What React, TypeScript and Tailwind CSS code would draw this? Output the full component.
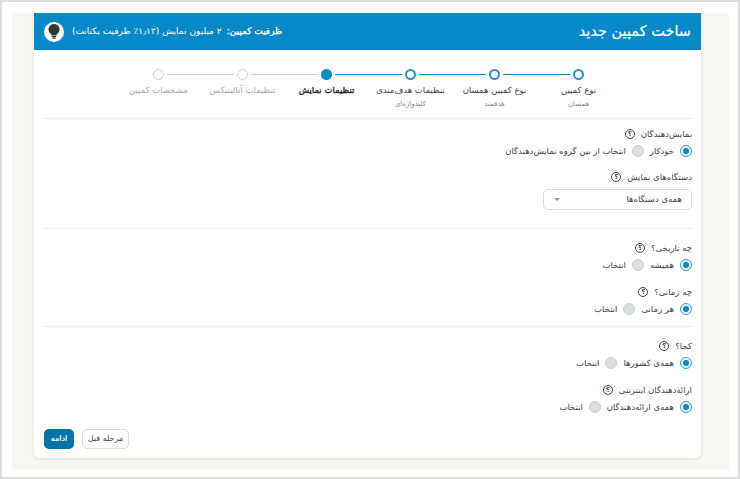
const font = "font-['DejaVu_Sans',sans-serif]";

function Help() {
  return (
    <span className="flex h-[10px] w-[10px] items-center justify-center rounded-full border border-[#444] text-[7px] font-bold leading-none text-[#444]">
      ؟
    </span>
  );
}

function Label({ children, className = "" }: { children: string; className?: string }) {
  return (
    <div className={`flex h-[14px] items-center gap-[6px] text-[8.5px] text-[#444] ${className}`}>
      <span>{children}</span>
      <Help />
    </div>
  );
}

function Radio({ label, on = false }: { label: string; on?: boolean }) {
  return (
    <div className="flex items-center gap-[6px]">
      {on ? (
        <span className="flex h-[12px] w-[12px] items-center justify-center rounded-full border border-[#3b9bd6] bg-[#e8f3fa]">
          <span className="h-[6px] w-[6px] rounded-full bg-[#0688c9]" />
        </span>
      ) : (
        <span className="h-[12px] w-[12px] rounded-full border border-[#c9cdd0] bg-[#dcdfe2]" />
      )}
      <span className="text-[8.5px] text-[#444]">{label}</span>
    </div>
  );
}

function Radios({ a, b, className = "" }: { a: string; b: string; className?: string }) {
  return (
    <div className={`flex h-[14px] items-center gap-[6px] ${className}`}>
      <Radio label={a} on />
      <Radio label={b} />
    </div>
  );
}

type Step = { t: string; s?: string; state: "done" | "active" | "todo" };
const steps: Step[] = [
  { t: "نوع کمپین", s: "همسان", state: "done" },
  { t: "نوع کمپین همسان", s: "هدفمند", state: "done" },
  { t: "تنظیمات هدف‌مندی", s: "کلیدواژه‌ای", state: "done" },
  { t: "تنظیمات نمایش", state: "active" },
  { t: "تنظیمات آنالیتیکس", state: "todo" },
  { t: "مشخصات کمپین", state: "todo" },
];

function StepItem({ step, first, last, nextTodo }: { step: Step; first: boolean; last: boolean; nextTodo: boolean }) {
  const before = step.state === "todo" ? "bg-[#cfcfcf]" : "bg-[#0688c9]";
  const after = nextTodo ? "bg-[#cfcfcf]" : "bg-[#0688c9]";
  return (
    <div className="flex w-[84px] flex-col items-center">
      <div className="flex h-[12px] w-full items-center gap-[3px]">
        <span className={`h-px flex-1 ${first ? "" : before}`} />
        {step.state === "active" ? (
          <span className="h-[11px] w-[11px] rounded-full bg-[#0688c9]" />
        ) : step.state === "done" ? (
          <span className="h-[11px] w-[11px] rounded-full border-2 border-[#2a94d2] bg-white" />
        ) : (
          <span className="h-[11px] w-[11px] rounded-full border-[1.5px] border-[#cfcfcf] bg-white" />
        )}
        <span className={`h-px flex-1 ${last ? "" : after}`} />
      </div>
      <div
        className={`mt-[3px] whitespace-nowrap text-[8.5px] leading-[14px] ${
          step.state === "active"
            ? "text-[#222] [-webkit-text-stroke:0.3px_#222]"
            : step.state === "todo"
              ? "text-[#aaa]"
              : "text-[#444]"
        }`}
      >
        {step.t}
      </div>
      {step.s && <div className="mt-px whitespace-nowrap text-[7px] leading-[12px] text-[#888]">{step.s}</div>}
    </div>
  );
}

export default function App() {
  return (
    <div dir="rtl" className={`h-[479px] w-[740px] overflow-hidden border-2 border-[#dcdcdc] bg-white pb-[8px] pl-[10px] pr-[9px] pt-[11px] ${font}`}>
      <div className="h-[456px] bg-[#f7f6f3] pl-[22px] pr-[28px]">
        <div className="h-[445px] rounded-b-[5px] bg-white shadow-[0_1px_3px_rgba(0,0,0,0.12)]">
          <div className="flex h-[37px] items-center justify-between bg-[#0688c9] pl-[10px] pr-[10px] text-white">
            <div className="text-[14.5px] [-webkit-text-stroke:0.2px_#fff]">ساخت کمپین جدید</div>
            <div className="flex items-center gap-[8px]">
              <div className="flex items-center gap-[5px] text-[9px]">
                <span className="[-webkit-text-stroke:0.3px_#fff]">ظرفیت کمپین:</span>
                <span>۲ میلیون نمایش (۱٫۱۳٪ ظرفیت یکتانت)</span>
              </div>
              <div className="flex h-[20px] w-[20px] items-center justify-center rounded-full bg-white">
                <svg width="12" height="15" viewBox="0 0 12 15" fill="#333">
                  <path d="M6 0a5.5 5.5 0 0 0-3.4 9.8c.6.5.9 1 .9 1.7h5c0-.7.3-1.2.9-1.7A5.5 5.5 0 0 0 6 0z" />
                  <rect x="3.7" y="12" width="4.6" height="1.2" rx=".5" />
                  <rect x="4.4" y="13.6" width="3.2" height="1.2" rx=".5" />
                </svg>
              </div>
            </div>
          </div>

          <div className="flex h-[68px] justify-center pl-[2px] pt-[18px]">
            {steps.map((s, i) => (
              <StepItem
                key={s.t}
                step={s}
                first={i === 0}
                last={i === steps.length - 1}
                nextTodo={i + 1 < steps.length && steps[i + 1].state === "todo"}
              />
            ))}
          </div>

          <div className="pl-[10px] pr-[9px]">
            <div className="border-t border-[#ececec] pt-[8px]">
              <Label>نمایش‌دهندگان</Label>
              <Radios className="mt-[3px]" a="خودکار" b="انتخاب از بین گروه نمایش‌دهندگان" />
              <Label className="mt-[12px]">دستگاه‌های نمایش</Label>
              <div className="mt-[5px] flex h-[21px] w-[149px] items-center justify-between rounded-[5px] border border-[#d9dcdf] pl-[10px] pr-[9px] text-[8.5px] text-[#444]">
                <span>همه‌ی دستگاه‌ها</span>
                <span className="h-0 w-0 border-x-[3px] border-t-[3px] border-x-transparent border-t-[#999]" />
              </div>
            </div>

            <div className="mt-[18px] border-t border-[#ececec] pt-[12px]">
              <Label>چه تاریخی؟</Label>
              <Radios className="mt-[3px]" a="همیشه" b="انتخاب" />
              <Label className="mt-[13px]">چه زمانی؟</Label>
              <Radios className="mt-[3px]" a="هر زمانی" b="انتخاب" />
            </div>

            <div className="mt-[10px] border-t border-[#ececec] pt-[12px]">
              <Label>کجا؟</Label>
              <Radios className="mt-[3px]" a="همه‌ی کشورها" b="انتخاب" />
              <Label className="mt-[13px]">ارائه‌دهندگان اینترنتی</Label>
              <Radios className="mt-[3px]" a="همه‌ی ارائه‌دهندگان" b="انتخاب" />
            </div>

            <div className="mt-[15px] flex justify-end gap-[8px]">
              <button className="flex h-[20px] w-[47px] items-center justify-center rounded-[5px] border border-[#d9d9d9] bg-white text-[8px] text-[#444]">
                مرحله قبل
              </button>
              <button className="flex h-[20px] w-[30px] items-center justify-center rounded-[5px] bg-[#0573ab] text-[8px] text-white [-webkit-text-stroke:0.2px_#fff]">
                ادامه
              </button>
            </div>
          </div>
        </div>
      </div>
    </div>
  );
}
